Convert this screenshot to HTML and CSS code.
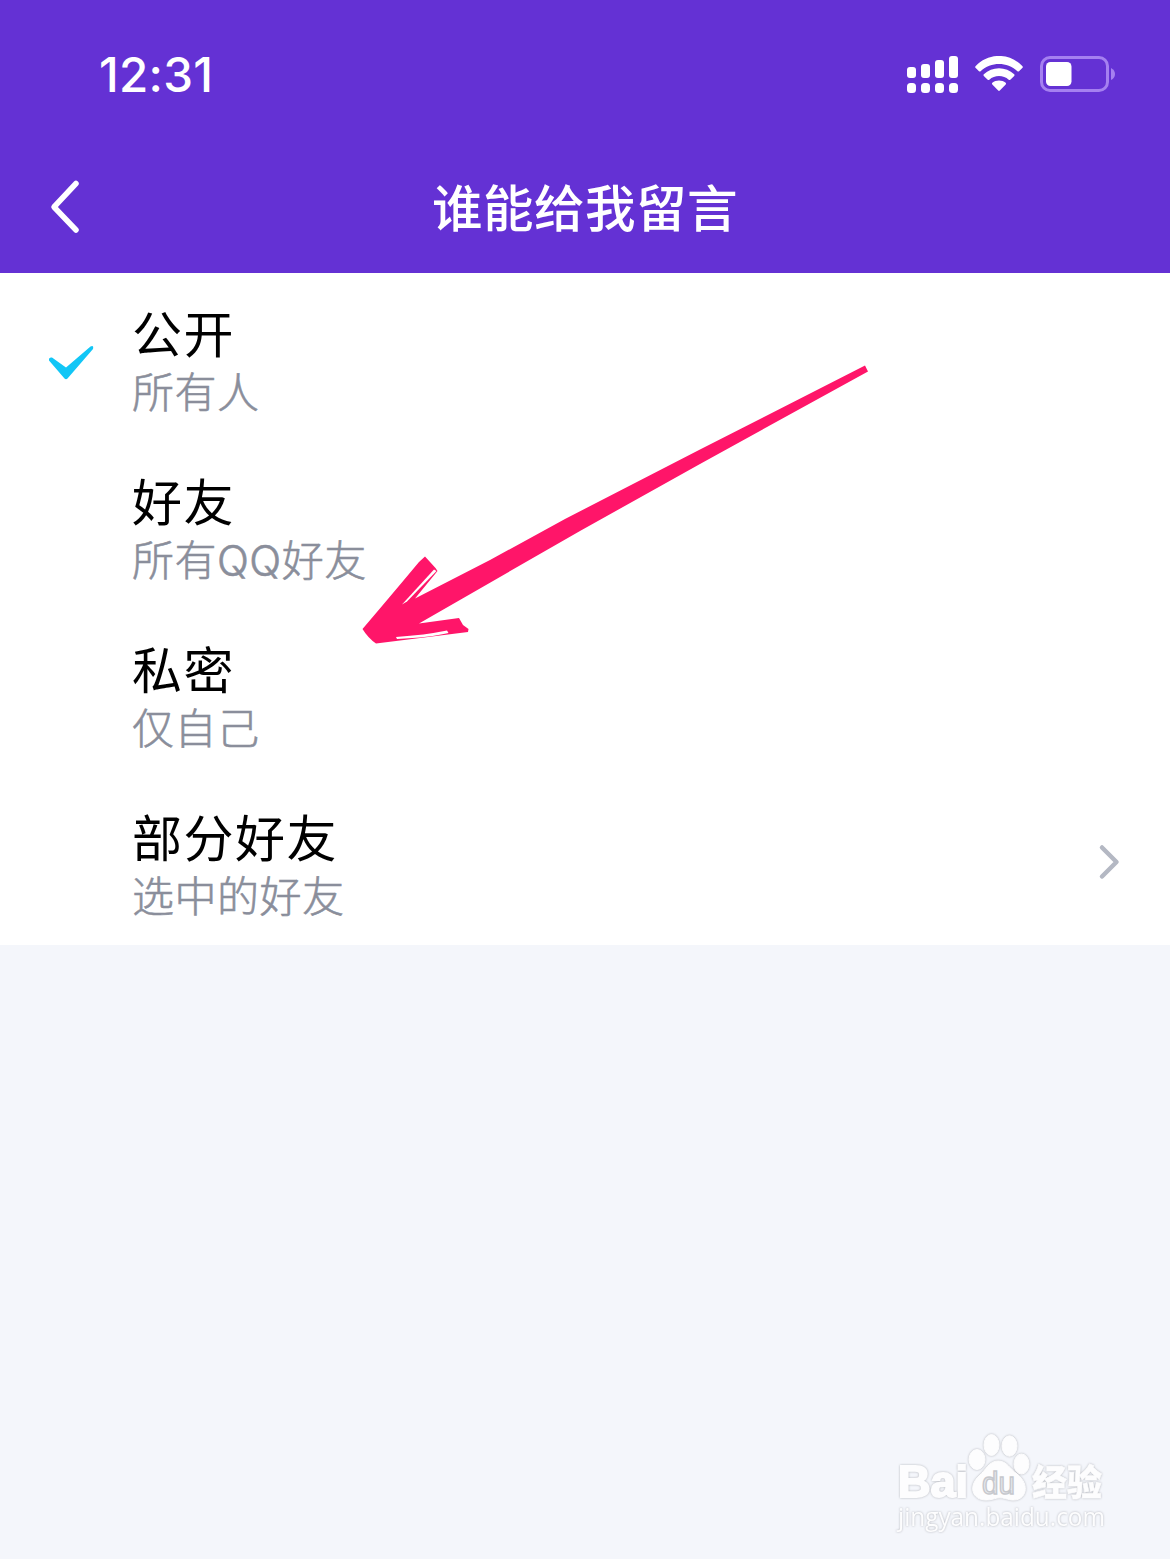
FILE: index.html
```html
<!DOCTYPE html>
<html lang="zh-CN">
<head>
<meta charset="utf-8">
<title>谁能给我留言</title>
<link rel="stylesheet" href="styles.css">
</head>
<body>
<main class="screen">
  <header class="header">
    <div class="status-bar">
      <span class="clock">12:31</span>
      <div class="status-icons">
        <svg class="signal" width="52" height="38" viewBox="0 0 52 38" fill="#fff">
          <rect x="0" y="11" width="9" height="11" rx="3"/><rect x="14" y="8" width="9" height="14" rx="3"/><rect x="28" y="4" width="9" height="18" rx="3"/><rect x="42" y="0" width="9" height="22" rx="3"/>
          <rect x="0" y="27" width="9" height="10" rx="3.5"/><rect x="14" y="27" width="9" height="10" rx="3.5"/><rect x="28" y="27" width="9" height="10" rx="3.5"/><rect x="42" y="27" width="9" height="10" rx="3.5"/>
        </svg>
        <svg class="wifi" width="50" height="38" viewBox="0 0 50 38" fill="#fff">
          <path d="M1.5 10.2C14.500-3.500 35.500-3.500 48.500 10.200Q49.200 11 48.500 11.800L45 15.200Q44.200 15.900 43.400 15.200C33 5.500 17 5.500 6.600 15.200Q5.800 15.900 5 15.200L1.500 11.800Q.8 11 1.500 10.200Z"/>
          <path d="M9.800 18.300C18 10.300 32 10.300 40.200 18.300Q41 19.100 40.200 19.900L36.300 23.700Q35.500 24.400 34.700 23.700C29.500 18.800 20.500 18.800 15.300 23.700Q14.500 24.400 13.700 23.700L9.800 19.900Q9 19.100 9.800 18.300Z"/>
          <path d="M18.300 26.800C22 23.700 28 23.700 31.700 26.800Q32.500 27.600 31.700 28.400L25.800 34.500Q25 35.300 24.200 34.500L18.300 28.400Q17.500 27.600 18.300 26.800Z"/>
        </svg>
        <svg class="battery" width="76" height="38" viewBox="0 0 76 38">
          <rect x="1.500" y="2.500" width="66" height="33" rx="8.500" fill="none" stroke="#a580f0" stroke-width="3"/>
          <rect x="6" y="7" width="25.500" height="24" rx="4.500" fill="#fff"/>
          <path d="M71 13Q75 15 75 19T71 25Z" fill="#a580f0"/>
        </svg>
      </div>
    </div>
    <nav class="nav-bar">
      <svg class="back" width="34" height="56" viewBox="0 0 34 56"><path d="M28 4.500 6 28 28 51" fill="none" stroke="#fff" stroke-width="5.500" stroke-linecap="round" stroke-linejoin="round"/></svg>
      <h1 class="title">谁能给我留言</h1>
    </nav>
  </header>

  <ul class="options">
    <li class="option">
      <div class="mark"><svg width="46" height="36" viewBox="0 0 46 36"><path d="M1 15.500Q.5 12 4 12.500L18 22.500 42.500 1.500Q46 0 45 4L19.500 33.500Q18 35 16.500 33.500Z" fill="#12c6f6"/></svg></div>
      <div class="text"><div class="name">公开</div><div class="note">所有人</div></div>
    </li>
    <li class="option">
      <div class="mark"></div>
      <div class="text"><div class="name">好友</div><div class="note">所有QQ好友</div></div>
    </li>
    <li class="option">
      <div class="mark"></div>
      <div class="text"><div class="name">私密</div><div class="note">仅自己</div></div>
    </li>
    <li class="option">
      <div class="mark"></div>
      <div class="text"><div class="name">部分好友</div><div class="note">选中的好友</div></div>
      <svg class="chevron" width="24" height="38" viewBox="0 0 24 38"><path d="M4 4.500 18.500 19 4 33.500" fill="none" stroke="#b4b8c3" stroke-width="4.500" stroke-linecap="round" stroke-linejoin="round"/></svg>
    </li>
  </ul>

  <svg class="arrow" width="520" height="290" viewBox="355 360 520 290">
    <path d="M362.500 629 Q394 592 419 562L425 556.500 435.500 568 437.500 571 415 598.500 490 560 565 519 700 449.500 865 365.500 868 371.500 700 464 580 531 419 623.500 459 618 463 625 468.500 629 468 632 376 643.500Q368 638 362.500 629Z" fill="#ff1569"/>
    <path d="M402 604.500 434 569.500 436.500 571 407 601.500Z" fill="#fff"/>
    <path d="M396 637Q425 635 447 630.500L448.500 633Q430 637.500 397 639Z" fill="#fff"/>
  </svg>

  <svg class="watermark" width="220" height="110" viewBox="892 1428 220 110">
    <g fill="#fdfdfe" stroke="#fdfdfe">
      <text class="brand" x="898" y="1497" textLength="70" lengthAdjust="spacingAndGlyphs">Bai</text>
      <g class="paw">
        <ellipse cx="977" cy="1459.500" rx="8" ry="10"/>
        <ellipse cx="991.500" cy="1445" rx="7.500" ry="10.500"/>
        <ellipse cx="1009.500" cy="1446" rx="7.500" ry="10.200"/>
        <ellipse cx="1021.500" cy="1464" rx="7.500" ry="10"/>
        <path d="M998 1461C1007 1461 1010 1469 1017 1474C1031 1485 1026 1501 1012 1500C1005 1499 1003 1497 997 1498C993 1499 991 1500 986 1500C972 1500 968 1486 979 1476C986 1470 989 1461 998 1461Z"/>
      </g>
      <text class="brand-cn" x="1032" y="1496" textLength="70" lengthAdjust="spacingAndGlyphs">经验</text>
    </g>
    <text class="paw-text" x="982" y="1494" textLength="33" lengthAdjust="spacingAndGlyphs">du</text>
    <text class="site" x="898" y="1526" textLength="207" lengthAdjust="spacingAndGlyphs">jingyan.baidu.com</text>
  </svg>
</main>
</body>
</html>
```
FILE: styles.css
```css
* { box-sizing: border-box; }

body {
  margin: 0;
  background: #f4f6fb;
  font-family: "Inter", "Noto Sans CJK SC", sans-serif;
}

.screen {
  position: relative;
  width: 1170px;
  height: 1559px;
  overflow: hidden;
}

.header {
  height: 273px;
  background: #6431d4;
  color: #fff;
}

.status-bar {
  display: flex;
  justify-content: space-between;
  align-items: center;
  height: 140px;
  padding: 8px 54px 0 99px;
}

.clock {
  padding-top: 2px;
  font-size: 47.500px;
  font-weight: 550;
  line-height: 60px;
  letter-spacing: 0.300px;
}

.status-icons {
  display: flex;
  align-items: center;
  gap: 15px;
}

.signal { margin-top: 2px; }
.wifi { margin-top: 1px; margin-right: 1px; }

.nav-bar {
  display: grid;
  grid-template-columns: 120px 1fr 120px;
  align-items: center;
  height: 133px;
}

.back { margin-left: 48px; }

.title {
  margin: 0;
  padding-top: 5px;
  font-size: 50.500px;
  font-weight: 500;
  line-height: 72px;
  letter-spacing: 0.500px;
  text-align: center;
}

.options {
  margin: 0;
  padding: 0;
  list-style: none;
  background: #fff;
}

.option {
  display: flex;
  align-items: center;
  height: 168px;
  padding-right: 48px;
}

.mark {
  width: 132px;
  padding: 16px 0 0 48px;
}

.text {
  flex: 1;
  padding-top: 11px;
}

.name {
  color: #000;
  font-size: 50px;
  line-height: 60px;
  letter-spacing: 1.500px;
}

.note {
  color: #8a8e9b;
  font-size: 42px;
  font-weight: 300;
  line-height: 56px;
  letter-spacing: 0.500px;
  -webkit-text-stroke: 0.600px #8a8e9b;
}

.chevron { margin-top: 1px; }

.arrow {
  position: absolute;
  left: 355px;
  top: 360px;
}

.watermark {
  position: absolute;
  left: 892px;
  top: 1428px;
}

.brand,
.paw,
.brand-cn,
.site {
  filter: drop-shadow(0 0 1px #b4b6bc);
}

.brand,
.paw-text {
  font-family: "Liberation Sans", sans-serif;
}

.brand {
  font-size: 44px;
  font-weight: 700;
  stroke-width: 2px;
}

.paw-text {
  font-size: 31px;
  fill: #e9eaee;
  stroke: #c6c8cd;
  stroke-width: 1.500px;
}

.brand-cn {
  font-family: "Noto Sans CJK SC", sans-serif;
  font-size: 36px;
  font-weight: 900;
  stroke-width: 0.500px;
}

.site {
  font-family: "Open Sans", sans-serif;
  font-size: 25px;
  fill: #fdfdfe;
}
```
